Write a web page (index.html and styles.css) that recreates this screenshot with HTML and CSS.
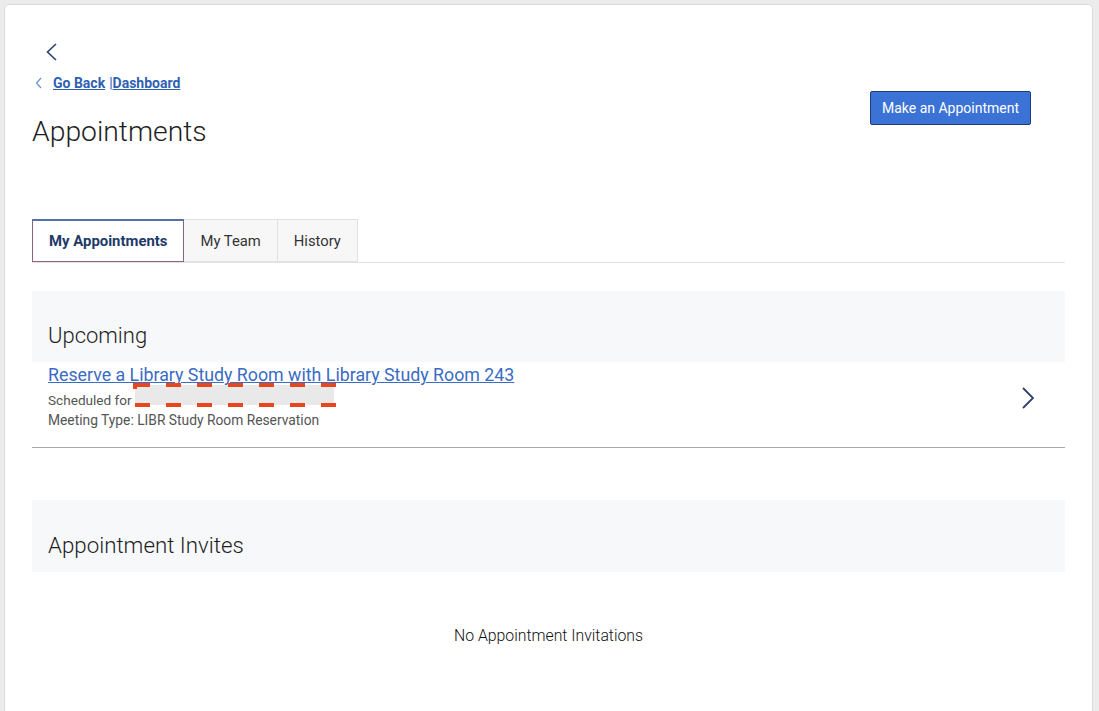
FILE: index.html
```html
<!DOCTYPE html>
<html lang="en">
<head>
<meta charset="utf-8">
<title>Appointments</title>
<link rel="stylesheet" href="styles.css">
</head>
<body>
<div class="card">
  <div class="back-icon">
    <svg width="12" height="18" viewBox="0 0 12 18"><path d="M11 1 L2.5 9 L11 17" fill="none" stroke="#2c4170" stroke-width="1.6"/></svg>
  </div>
  <div class="header">
    <div class="header-left">
      <div class="crumbs">
        <svg class="crumb-chev" width="7" height="12" viewBox="0 0 7 12"><path d="M6 1 L1.5 6 L6 11" fill="none" stroke="#6d8fd0" stroke-width="1.2"/></svg>
        <a href="#" class="crumb-link">Go Back</a>
        <span class="sep">|</span><a href="#" class="crumb-link">Dashboard</a>
      </div>
      <h1 class="title">Appointments</h1>
    </div>
    <button class="primary-btn">Make an Appointment</button>
  </div>

  <div class="tabs">
    <div class="tab active">My Appointments</div>
    <div class="tab">My Team</div>
    <div class="tab">History</div>
  </div>

  <div class="section-head">Upcoming</div>
  <div class="appt">
    <div class="appt-body">
      <a href="#" class="appt-link">Reserve a Library Study Room with Library Study Room 243</a>
      <div class="sched">
        <span class="sched-text">Scheduled for</span>
        <span class="redact">
          <svg width="203" height="24" viewBox="0 0 203 24"><rect x="2" y="2" width="199" height="20" fill="#e9e9e9" stroke="#e8461f" stroke-width="4" stroke-dasharray="15 16"/></svg>
        </span>
      </div>
      <div class="meta">Meeting Type: LIBR Study Room Reservation</div>
    </div>
    <svg class="appt-chev" width="12" height="22" viewBox="0 0 12 22"><path d="M1 1 L11 11 L1 21" fill="none" stroke="#2b4170" stroke-width="1.8"/></svg>
  </div>

  <div class="section-head invites">Appointment Invites</div>
  <div class="empty">No Appointment Invitations</div>
</div>
</body>
</html>
```

FILE: styles.css
```css
html, body {
  margin: 0;
  padding: 0;
  height: 100%;
  overflow: hidden;
}
body {
  background: #ececec;
  font-family: Roboto, "Liberation Sans", Arial, sans-serif;
  color: #222;
}
.card {
  background: #fff;
  border: 1px solid #dadada;
  border-radius: 5px;
  margin: 4px 6px 0 4px;
  padding: 0 27px;
  min-height: 800px;
}
.back-icon {
  margin-top: 38px;
  height: 18px;
  padding-left: 13px;
}
.back-icon svg { display: block; }
.header {
  display: flex;
  justify-content: space-between;
  align-items: flex-start;
}
.crumbs {
  margin-top: 13px;
  height: 18px;
  display: flex;
  align-items: center;
  font-size: 14px;
  font-weight: 700;
  line-height: 18px;
}
.crumb-chev {
  margin-left: 3px;
  margin-right: 11px;
}
.crumb-link {
  color: #2f5fb3;
  text-decoration: underline;
}
.sep {
  color: #2f5fb3;
  font-weight: 400;
  margin-left: 4px;
  margin-right: 0;
}
.title {
  margin: 22px 0 0;
  font-size: 28.3px;
  font-weight: 300;
  line-height: 36px;
  color: #1e1e1e;
}
.primary-btn {
  margin-top: 30px;
  margin-right: 34px;
  height: 34px;
  width: 161px;
  background: #3b72d6;
  border: 1px solid #1e3c78;
  border-radius: 2px;
  color: #fff;
  font-family: Roboto, "Liberation Sans", Arial, sans-serif;
  font-size: 14px;
  padding: 0;
}
.tabs {
  margin-top: 69px;
  display: flex;
  border-bottom: 1px solid #e3e3e3;
}
.tab {
  height: 41px;
  line-height: 42px;
  padding: 0 16px;
  font-size: 14.8px;
  color: #333;
  background: #f7f7f7;
  border: 1px solid #e2e2e2;
  border-left: none;
}
.tab.active {
  background: #fff;
  color: #1f3a68;
  font-weight: 700;
  font-size: 14.9px;
  border: 1px solid #8a6480;
  border-top: 2px solid #5470a8;
  height: 40px;
  line-height: 41px;
}
.section-head {
  margin-top: 28px;
  background: #f7f8fa;
  padding: 32px 16px 13px;
  font-size: 22px;
  font-weight: 300;
  line-height: 26px;
  color: #1e1e1e;
}
.section-head.invites {
  margin-top: 52px;
  padding-bottom: 14px;
  font-size: 22.3px;
}
.appt {
  display: flex;
  justify-content: space-between;
  align-items: flex-start;
  padding: 2px 31px 17px 16px;
  border-bottom: 1px solid #a9a9a9;
}
.appt-body {
  display: flex;
  flex-direction: column;
  align-items: flex-start;
}
.appt-link {
  font-size: 17.8px;
  line-height: 22px;
  color: #3a6cc4;
  text-decoration: underline;
  margin-bottom: -3px;
}
.sched {
  display: flex;
  align-items: flex-end;
  height: 24px;
}
.sched-text {
  font-size: 13.6px;
  line-height: 14px;
  color: #555;
}
.redact {
  margin-left: 1px;
  height: 24px;
}
.redact svg { display: block; }
.meta {
  margin-top: 3px;
  font-size: 13.8px;
  line-height: 20px;
  color: #555;
}
.appt-chev {
  margin-top: 23px;
  display: block;
}
.empty {
  margin-top: 53px;
  text-align: center;
  font-size: 15.8px;
  font-weight: 300;
  line-height: 22px;
  color: #111;
}
```
